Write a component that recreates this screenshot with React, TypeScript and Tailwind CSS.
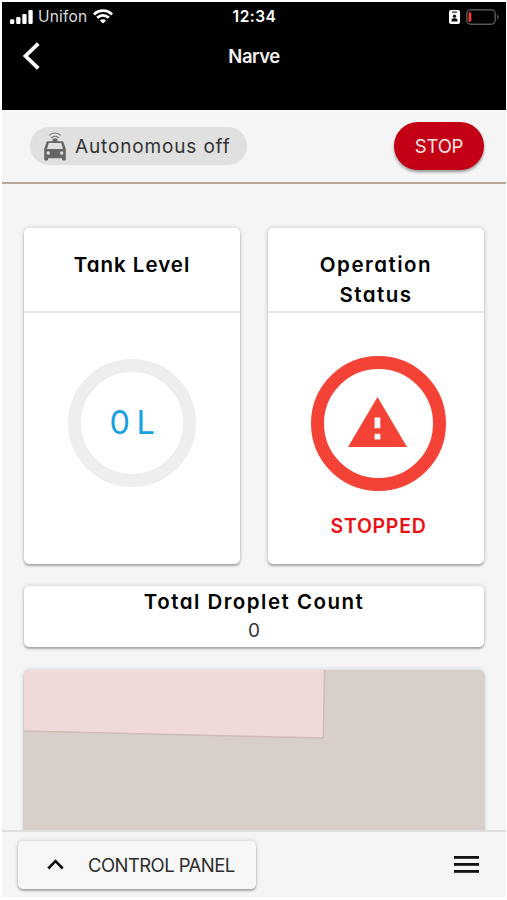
import React from "react";

const cardShadow =
  "rounded-[5px] shadow-[0_2px_2px_rgba(0,0,0,0.26),0_0_5px_rgba(0,0,0,0.18)]";

function StatusBar() {
  return (
    <div className="flex h-[29px] items-center pl-[8px] pr-[7px]">
      <div className="flex flex-1 items-center">
        <svg width="23" height="14" viewBox="0 0 23 14" fill="#fff">
          <rect x="0" y="9.2" width="4.3" height="4.8" rx="1.2" />
          <rect x="6.2" y="7" width="4.3" height="7" rx="1.2" />
          <rect x="12.3" y="4" width="4.3" height="10" rx="1.2" />
          <rect x="18.4" y="0" width="4.3" height="14" rx="1.2" />
        </svg>
        <span className="ml-[5px] text-[15.5px] leading-none tracking-[0.2px] text-[#dedede]">
          Unifon
        </span>
        <svg className="ml-[6px]" width="20" height="15" viewBox="0 0 20 15" fill="none" stroke="#fff" strokeWidth="2.8">
          <path d="M1 5.4C6 .4 14 .4 19 5.4" />
          <path d="M4.2 8.8c3.3-3.2 8.3-3.2 11.6 0" />
          <path d="M10 14.6 6.9 11.4c1.8-1.6 4.4-1.6 6.2 0Z" fill="#fff" stroke="none" />
        </svg>
      </div>
      <span className="text-[15.5px] font-semibold leading-none tracking-[0.5px] text-white">12:34</span>
      <div className="flex flex-1 items-center justify-end">
        <svg width="11" height="14" viewBox="0 0 11 14">
          <rect width="11" height="14" rx="2" fill="#fff" />
          <rect x="3" y="1.5" width="5" height="1.2" fill="#222" />
          <circle cx="5.5" cy="6.2" r="1.6" fill="#111" />
          <path d="M2.5 11.5V10c0-1.2 1.2-1.7 3-1.7s3 .5 3 1.7v1.5Z" fill="#111" />
        </svg>
        <svg className="ml-[6px]" width="33" height="16" viewBox="0 0 33 16">
          <rect x=".8" y=".8" width="28.4" height="14.4" rx="4" fill="none" stroke="#565656" strokeWidth="1.5" />
          <rect x="2.5" y="3.3" width="2.8" height="9.4" rx="1.2" fill="#f43b34" />
          <path d="M31 5.5c2 .8 2 4.2 0 5Z" fill="#565656" />
        </svg>
      </div>
    </div>
  );
}

function RobotCar() {
  return (
    <svg width="24" height="30" viewBox="0 0 24 30" fill="#666">
      <path d="M6 4.4c3.400-3.200 8.600-3.200 12 0M8.200 6.800c2.200-2 5.400-2 7.600 0" fill="none" stroke="#777" strokeWidth="1.2" />
      <rect x="9.600" y="7.600" width="4.800" height="4" rx="1" />
      <path
        fillRule="evenodd"
        d="M5.300 10.300h13.400c1 0 1.600.4 1.900 1.300L22.800 18v10.200c0 .8-.4 1.200-1.100 1.200h-1.600c-.7 0-1.100-.4-1.100-1.200v-.9H5v.9c0 .8-.4 1.200-1.100 1.200H2.300c-.7 0-1.100-.4-1.100-1.200V18l2.200-6.400c.3-.9.900-1.300 1.900-1.300Zm.5 1.700L4 18.100h16L18.200 12Zm-.5 8.300a1.700 1.700 0 1 0 0 3.400 1.700 1.700 0 0 0 0-3.400Zm13.400 0a1.700 1.700 0 1 0 0 3.400 1.700 1.700 0 0 0 0-3.400Z"
      />
    </svg>
  );
}

function Card({ title, children }: { title: React.ReactNode; children: React.ReactNode }) {
  return (
    <section className={`flex h-[336px] w-[216px] flex-col bg-white ${cardShadow}`}>
      <h2 className="h-[85px] border-b-2 border-[#e4e4e4] pt-[22px] text-center text-[20.5px] font-semibold leading-[29.5px] text-black">
        {title}
      </h2>
      {children}
    </section>
  );
}

export default function App() {
  return (
    <div className="h-[900px] w-[507px] overflow-hidden bg-white pl-[2px] pr-[1px] pt-[2px] font-['Inter',sans-serif]">
      <div className="flex h-[895px] flex-col bg-[#f5f5f5] [font-feature-settings:'cv11']">
        <header className="h-[108px] bg-black [font-feature-settings:normal]">
          <StatusBar />
          <div className="grid h-[50px] grid-cols-[1fr_auto_1fr] items-center">
            <svg className="ml-[20px]" width="20" height="28" viewBox="0 0 20 28" fill="none" stroke="#fff" strokeWidth="3.8">
              <path d="M16.3 1.7 3.5 14l12.8 12.3" />
            </svg>
            <h1 className="text-[18.5px] font-semibold leading-none tracking-[-0.5px] text-[#f4f4f4]">Narve</h1>
          </div>
        </header>

        <div className="flex h-[74px] items-center justify-between border-b-2 border-[#b9a595] pl-[28px] pr-[22px]">
          <div className="flex h-[38px] w-[217px] items-center rounded-full bg-[#e0e0e0] pl-[13px]">
            <RobotCar />
            <span className="ml-[8px] whitespace-nowrap text-[19px] leading-none tracking-[0.85px] text-[#333]">
              Autonomous off
            </span>
          </div>
          <button className="h-[48px] w-[90px] rounded-full bg-[#c40014] text-[18.5px] leading-none tracking-[-0.2px] text-[#ffe9e9] shadow-[0_2px_3px_rgba(0,0,0,0.4)]">
            STOP
          </button>
        </div>

        <main className="flex min-h-0 flex-1 flex-col overflow-hidden px-[22px] pt-[44px]">
          <div className="flex justify-between">
            <Card title={<span className="tracking-[1px]">Tank Level</span>}>
              <div className="mx-auto mt-[46px] flex h-[128px] w-[128px] items-center justify-center rounded-full border-[13px] border-[#eeeeee]">
                <span className="text-[32.5px] leading-none tracking-[-0.3px] [word-spacing:-2px] text-[#16a1e2]">0 L</span>
              </div>
            </Card>
            <Card
              title={
                <span className="tracking-[1.5px]">
                  Operation
                  <br />
                  Status
                </span>
              }
            >
              <div className="ml-[43px] mt-[43px] flex h-[135px] w-[135px] items-center justify-center rounded-full border-[13px] border-[#f44336]">
                <svg className="mb-[3px] mr-[2px]" width="59" height="50" viewBox="0 0 59 50" fill="#f44336">
                  <path fillRule="evenodd" d="M29.5 0 59 50H0ZM26.6 20.6V31.3h5.7V20.6Zm0 16.2v5.7h5.7v-5.7Z" />
                </svg>
              </div>
              <div className="mt-[26px] pl-[5px] text-center text-[19.5px] font-semibold leading-none tracking-[0.7px] text-[#ec1014]">
                STOPPED
              </div>
            </Card>
          </div>

          <section className={`mt-[22px] h-[61px] shrink-0 bg-white text-center ${cardShadow}`}>
            <h2 className="text-[20.5px] font-semibold leading-[31px] tracking-[1.48px] text-black">
              Total Droplet Count
            </h2>
            <p className="text-[19px] leading-[28px] text-[#333]">0</p>
          </section>

          <div className={`mt-[23px] h-[180px] shrink-0 overflow-hidden bg-[#d9cfca] ${cardShadow}`}>
            <svg width="460" height="180" viewBox="0 0 460 180">
              <path d="M-2-2H300.5L299.3 68-2 61Z" fill="#f0dad9" stroke="#cfbdb5" strokeWidth="1.5" />
            </svg>
          </div>
        </main>

        <footer className="flex h-[67px] shrink-0 items-center justify-between border-t-2 border-[#dedfdb] pl-[16px] pr-[27px]">
          <button className={`flex h-[48px] w-[238px] items-center bg-[#f7f7f7] pl-[29px] ${cardShadow}`}>
            <svg width="17" height="11" viewBox="0 0 17 11" fill="none" stroke="#111" strokeWidth="2.6">
              <path d="M1.3 9.5 8.5 2.2l7.2 7.3" />
            </svg>
            <span className="ml-[24px] whitespace-nowrap pt-[1px] text-[18.5px] leading-none tracking-[-0.57px] text-[#2d2d2d]">
              CONTROL PANEL
            </span>
          </button>
          <svg width="25" height="17" viewBox="0 0 25 17" fill="#111">
            <rect width="25" height="2.8" />
            <rect y="7" width="25" height="2.8" />
            <rect y="14" width="25" height="2.8" />
          </svg>
        </footer>
      </div>
    </div>
  );
}
